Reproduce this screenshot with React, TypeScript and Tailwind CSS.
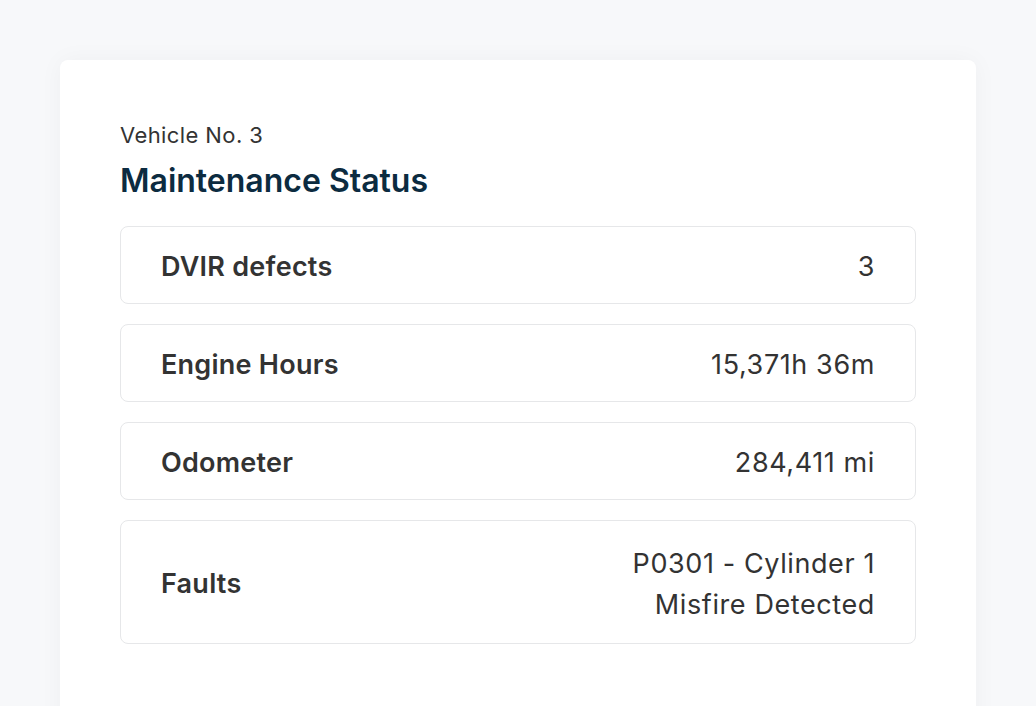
import React from "react";

const rows: { label: string; value: string[] }[] = [
  { label: "DVIR defects", value: ["3"] },
  { label: "Engine Hours", value: ["15,371h 36m"] },
  { label: "Odometer", value: ["284,411 mi"] },
  { label: "Faults", value: ["P0301 - Cylinder 1", "Misfire Detected"] },
];

export default function App() {
  return (
    <div
      className="min-h-screen bg-[#f7f8fa] p-[60px]"
      style={{ fontFamily: "Inter, 'Noto Sans', sans-serif" }}
    >
      <div className="rounded-lg bg-white px-[60px] pt-[60px] pb-[100px] shadow-[0_0_24px_rgba(0,0,0,0.04)]">
        <div className="text-[22px] leading-[30px] tracking-[0.4px] text-[#333333]">
          Vehicle No. 3
        </div>
        <div className="mt-[13px] text-[32px] font-semibold leading-[36px] text-[#0c2b40]">
          Maintenance Status
        </div>
        <div className="mt-[27px] flex flex-col gap-5">
          {rows.map((r) => (
            <div
              key={r.label}
              className="flex items-center justify-between rounded-lg border border-[#e6e7e9] px-10 pt-[22px] pb-[18px]"
            >
              <div className="text-[27px] font-semibold leading-9 tracking-[0.25px] text-[#333333]">
                {r.label}
              </div>
              <div
                className={
                  "text-right text-[27px] tracking-[0.6px] text-[#333333] " +
                  (r.value.length > 1 ? "leading-[41px]" : "leading-9")
                }
              >
                {r.value.map((v) => (
                  <div key={v}>{v}</div>
                ))}
              </div>
            </div>
          ))}
        </div>
      </div>
    </div>
  );
}
